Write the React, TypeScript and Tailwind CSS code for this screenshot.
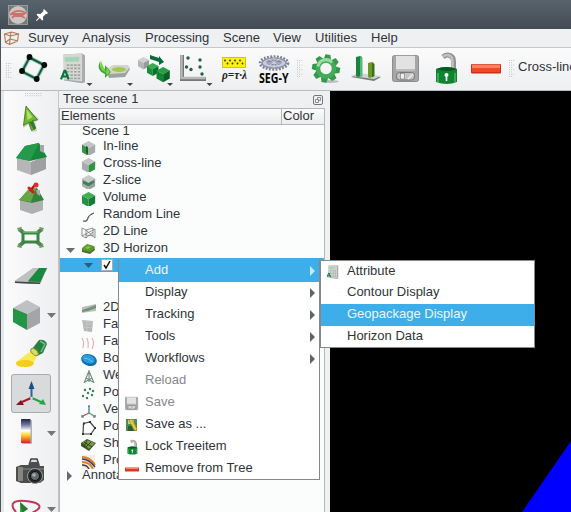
import type { ReactNode } from "react";

type Box = [number, number, number, number];

/** Drawing whose user space is given by a view box, shown at natural size. */
function Art({ box, children }: { box: Box; children: ReactNode }) {
  return (
    <svg className="block shrink-0" width={box[2]} height={box[3]} viewBox={box.join(" ")}>
      {children}
    </svg>
  );
}

function Grip({ across = false, rows = 8 }: { across?: boolean; rows?: number }) {
  const dots = [];
  const cols = across ? 8 : 3;
  const lines = across ? 2 : rows;
  for (let r = 0; r < lines; r++)
    for (let c = 0; c < cols; c++)
      if (across || c !== 2 || r % 2 === 0)
        dots.push(<rect key={`${r}-${c}`} x={c * 2.2} y={r * 2.3} width="0.9" height="0.9" fill="#b3b7ba" />);
  return (
    <svg className="block shrink-0" width={across ? 18 : 7} height={across ? 7 : 19}>
      {dots}
    </svg>
  );
}

function Cube({ x, y, s, top, left, right }: { x: number; y: number; s: number; top: string; left: string; right: string }) {
  const t = `translate(${x} ${y}) scale(${s})`;
  return (
    <g transform={t}>
      <path d="M0 3.7 7 0l7 3.7-7 4z" fill={top} />
      <path d="M0 3.7 7 7.7V16L0 12z" fill={left} />
      <path d="M14 3.7 7 7.7V16l7-4z" fill={right} />
    </g>
  );
}

function Floppy({ x, y, s }: { x: number; y: number; s: number }) {
  return (
    <g transform={`translate(${x} ${y}) scale(${s})`}>
      <rect x="0.5" y="0.5" width="26" height="26" rx="2" fill="#a6a6a6" stroke="#8d8d8d" />
      <rect x="4" y="0.8" width="19" height="14" fill="#e2e2e2" />
      <rect x="4" y="14" width="19" height="2" fill="#bdbdbd" />
      <rect x="4.5" y="17.5" width="18" height="7.5" rx="3" fill="#c4c4c4" stroke="#777" />
      <rect x="8.500" y="18.500" width="4" height="5.500" fill="#eee" stroke="#777" strokeWidth=".6" />
      <path d="m16 24 5-5" stroke="#eee" strokeWidth="1.5" />
    </g>
  );
}

function Lock({ x, y, s }: { x: number; y: number; s: number }) {
  return (
    <g transform={`translate(${x} ${y}) scale(${s})`}>
      <path d="M8 4C13 0 18.500 3 18.500 8v8" fill="none" stroke="#929292" strokeWidth="5" />
      <path d="M8 3.500C13 0 17.500 3 17.500 8v7" fill="none" stroke="#c2c2c2" strokeWidth="2.500" />
      <path d="M1 16q10-4 21 0v13q-10 4-21 0z" fill="#118432" />
      <path d="M1 16q10-4 21 0-10 4-21 0z" fill="#075a20" />
      <path d="M3 20v9M20 20v9" stroke="#3ba85a" strokeWidth="2" />
      <circle cx="11.5" cy="22" r="2" fill="#fff" />
      <path d="M11.5 22v6" stroke="#fff" strokeWidth="1.6" />
    </g>
  );
}

function Calc({ x, y, s }: { x: number; y: number; s: number }) {
  return (
    <g transform={`translate(${x} ${y}) scale(${s})`}>
      <path d="M3 1 22 0l3 2v28l-3 1-19-3z" fill="#aaa" />
      <path d="m2 1 20-1v29L3 27z" fill="#d5d8d4" />
      <path d="m4 4 15-.6v5L4 8.5z" fill="#a5d3b5" />
      <path d="M6 12h14M6 15.5h14M6 19h14M6 22.500h14M6 26h14" stroke="#a1a5a2" strokeWidth="1.8" strokeDasharray="2.6 1.2" />
      <path d="m0 27 3.600-9h1L8 27M1.300 24h5.400" fill="none" stroke="#08743d" strokeWidth="2.2" />
    </g>
  );
}

const dark = "#676b6e";

const toolbar: { box: Box; art: ReactNode }[] = [
  {
    box: [17, 48, 39, 42],
    art: (
      <g>
        <path d="m29.500 57.500 14.500 7.500-7.500 14L22 71.500z" fill="none" stroke="#9fd0bd" strokeWidth="4" />
        <path d="m29.500 57.500 14.500 7.500-7.500 14L22 71.500z" fill="none" stroke="#18593c" strokeWidth="2" />
        <g fill="#050806">
          <circle cx="29.500" cy="57" r="2.900" />
          <circle cx="44.300" cy="65" r="2.900" />
          <circle cx="36.700" cy="79" r="2.900" />
          <circle cx="22" cy="71" r="2.900" />
        </g>
      </g>
    ),
  },
  {
    box: [56, 48, 40, 42],
    art: (
      <g>
        <Calc x={61} y={53.500} s={0.96} />
        <path d="M86.500 83h6l-3 3z" fill="#444" />
      </g>
    ),
  },
  {
    box: [96, 48, 40, 42],
    art: (
      <g>
        <path d="m106 70 8-5h13l3 4-5 8-16 1z" fill="#9da39d" />
        <path d="m106 70 8-5h13l3 2-5 6-16 1z" fill="#d3d6d0" />
        <ellipse cx="119" cy="69.500" rx="7" ry="2.500" fill="#a1c94f" />
        <path d="M101 60c-4 6-3 11 4 14v4l6-6-6-7v4c-5-1-6-5-4-9z" fill="#36a744" />
        <path d="M101 61c-2 6 0 10 5 11l1-4 3 4-3 3z" fill="#80d33a" />
        <path d="M127 83h6l-3 3z" fill="#444" />
      </g>
    ),
  },
  {
    box: [136, 48, 41, 42],
    art: (
      <g>
        <path d="m150 55 9 3v-2l5 6-5 3v-3l-9-3z" fill="#086c38" />
        <Cube x={138} y={57} s={0.78} top="#d1d1d1" left="#b5b5b5" right="#999" />
        <Cube x={147} y={63} s={0.82} top="#35ad4b" left="#149136" right="#087128" />
        <Cube x={156.500} y={67} s={0.95} top="#25a044" left="#128633" right="#056124" />
        <path d="M167 83h6l-3 3z" fill="#444" />
      </g>
    ),
  },
  {
    box: [177, 48, 41, 42],
    art: (
      <g>
        <path d="M182 55v24h24" fill="none" stroke="#777" strokeWidth="4" />
        <path d="M181.500 55v23h24" fill="none" stroke="#b7b7b7" strokeWidth="2.500" />
        <g fill="#245f49">
          <circle cx="188" cy="58" r="1.700" />
          <circle cx="200" cy="60" r="1.700" />
          <circle cx="186.500" cy="67" r="1.700" />
          <circle cx="191" cy="69.500" r="1.700" />
          <circle cx="200" cy="67" r="1.700" />
          <circle cx="202" cy="74" r="1.700" />
        </g>
        <path d="M206.500 83h6l-3 3z" fill="#444" />
      </g>
    ),
  },
  {
    box: [218, 48, 37, 42],
    art: (
      <g>
        <rect x="222.500" y="57.500" width="23" height="10" fill="#fbf20c" stroke="#d0c51c" />
        <g fill="#373300">
          {[225, 230, 235, 240].map((x) => (
            <g key={x}>
              <circle cx={x} cy="60.500" r="0.900" />
              <circle cx={x + 2.500} cy="63.500" r="0.900" />
            </g>
          ))}
        </g>
        <text x="222" y="79" fontSize="12" fontStyle="italic" fontWeight="bold" fontFamily="Liberation Serif" textLength="25" lengthAdjust="spacingAndGlyphs" fill="#222">
          ρ=τ·λ
        </text>
      </g>
    ),
  },
  {
    box: [255, 48, 42, 42],
    art: (
      <g>
        <ellipse cx="274" cy="63" rx="13.800" ry="6.200" fill="none" stroke="#7b8098" strokeWidth="3" strokeDasharray="1.800 1.400" />
        <ellipse cx="274" cy="63" rx="12" ry="5" fill="#c9ccdb" stroke="#9094aa" strokeWidth="1.500" />
        <ellipse cx="274" cy="62.500" rx="8" ry="3" fill="#838799" />
        <path d="M265.500 63h17M274 57v11M268.500 59l11 7M279.500 59l-11 7" stroke="#e0e1ea" strokeWidth="0.700" />
        <g transform="translate(259 83) scale(.72 1)">
          <text fontSize="14" fontWeight="bold" fontFamily="Open Sans, Noto Sans, sans-serif" textLength="41" lengthAdjust="spacingAndGlyphs" fill="#080808">
            SEG-Y
          </text>
        </g>
      </g>
    ),
  },
];

const fileTools: { box: Box; art: ReactNode }[] = [
  {
    box: [305, 48, 42, 42],
    art: (
      <g transform="translate(326 68.500)">
        <ellipse cx="4" cy="13" rx="9" ry="1.500" fill="#b9bfba" />
        <g fill="#37984b">
          {[10, 55, 100, 145, 190, 235, 280, 325].map((a) => (
            <path key={a} transform={`rotate(${a})`} d="M-4-8-3-14h5l2 6z" />
          ))}
        </g>
        <circle r="8" fill="none" stroke="#43ac58" strokeWidth="4.500" />
        <path d="M-8-2a8 8 0 0 1 14-4" fill="none" stroke="#9bdca2" strokeWidth="3" />
      </g>
    ),
  },
  {
    box: [347, 48, 40, 42],
    art: (
      <g>
        <path d="m351 77 8-3 22 3-7 4z" fill="#777c7b" />
        <path d="m351 76 8-3 22 3-7 3z" fill="#cfd4d2" />
        <path d="m356 57 4-1 2 1v19l-4 1-2-1z" fill="#16853b" />
        <path d="m360 57 2.500 1v18l-2.500 1z" fill="#59b778" />
        <path d="m368 63 4-1 2 1v13l-4 2-2-1z" fill="#6b9927" />
        <path d="m372 63 2.500 1v12l-2.500 1.500z" fill="#3e701b" />
      </g>
    ),
  },
  { box: [387, 48, 39, 42], art: <Floppy x={392} y={55} s={1} /> },
  { box: [426, 48, 40, 42], art: <Lock x={435} y={53} s={1} /> },
  {
    box: [466, 48, 41, 42],
    art: (
      <g>
        <rect x="471" y="64" width="30" height="9.500" rx="1" fill="#c83118" />
        <rect x="472" y="64.500" width="28" height="4" fill="#f58362" />
        <rect x="472" y="68" width="28" height="4" fill="#ee4826" />
      </g>
    ),
  },
];

const sideTools: { box: Box; art: ReactNode; more?: boolean; low?: boolean; on?: boolean }[] = [
  {
    box: [11, 99, 40, 40],
    art: (
      <g>
        <path d="m26 107 13 12-4 3 2 9-5 1-3-8-6 4z" fill="#9ba293" opacity=".5" />
        <path d="m26 106 11.500 14-5 .5 3 8-4 2-3-8-5 3z" fill="#6fb92b" stroke="#3c6e20" strokeWidth=".8" />
        <path d="m26.500 109 1 11 5-3z" fill="#b3e268" />
        <path d="m29 122 5 8 2-2-3-7z" fill="#347a31" />
      </g>
    ),
  },
  {
    box: [11, 139, 40, 40],
    art: (
      <g>
        <path d="m17 157 14 5v13l-14-5zM31 162l15-6v13l-15 6z" fill="#b6b6b8" />
        <path d="m31 162 15-6v13l-15 6z" fill="#a0a0a3" />
        <path d="m16 158 9-12 14-3 8 14-17 4z" fill="#16883d" />
        <path d="m25 146 14-3-9 18-14-3z" fill="#249a4a" />
        <path d="M40 145h4v8l-4-2z" fill="#a6a6a7" />
      </g>
    ),
  },
  {
    box: [11, 179, 40, 40],
    art: (
      <g>
        <path d="m20 199 12 4v11l-12-4zM32 203l11-4v11l-11 4z" fill="#afb0b1" />
        <path d="m19 200 9-10 9-2 7 12-12 3z" fill="#348338" />
        <path d="m28 190 8-2-5 14-12-2z" fill="#65a644" />
        <path d="M36 190h4v6l-3-2z" fill="#aaa" />
        <path d="m30 191 5-6" stroke="#b81515" strokeWidth="2.500" />
        <path d="m29 188 4 4" stroke="#d51a1a" strokeWidth="3" strokeLinecap="round" />
        <path d="m31 192-3 4" stroke="#a88" />
        <circle cx="36" cy="185" r="2.500" fill="#e12b2b" />
      </g>
    ),
  },
  {
    box: [11, 219, 40, 38],
    art: (
      <g>
        <path d="m19 229 6 5M42 229l-6 5M19 246l6-5M42 246l-6-5" stroke="#50864c" strokeWidth="4" />
        <path d="m17 228 5-1-3 5zM44 228l-5-1 3 5zM17 247l5 1-3-5zM44 247l-5 1 3-5z" fill="#6a9c62" />
        <rect x="23" y="233" width="15" height="9" rx="1" fill="#f5faf4" stroke="#398746" strokeWidth="3" />
        <path d="M23 232h15" stroke="#95cd7e" />
      </g>
    ),
  },
  {
    box: [11, 257, 40, 39],
    art: (
      <g>
        <path d="m15 281 19-13h13l-7 16-25-1z" fill="#777b78" />
        <path d="m15 281 18-13h7l-12 14z" fill="#bfc1c0" />
        <path d="m28 281 11-13h8l-7 14z" fill="#168a3d" />
        <path d="M15 282h13l12 1v1l-25-1z" fill="#444" />
      </g>
    ),
  },
  {
    box: [11, 296, 36, 38],
    more: true,
    art: (
      <g>
        <path d="m13 308 14-8 13 7-13 7z" fill="#bfc0c2" />
        <path d="m13 308 14 6v16l-14-8z" fill="#239547" />
        <path d="m27 314 13-7v16l-13 7z" fill="#a4a5a8" />
      </g>
    ),
  },
  {
    box: [11, 334, 40, 40],
    art: (
      <g>
        <path d="m31 351-15 11q-1 5 8 5 8 0 9-4l5-8z" fill="#f9e957" />
        <ellipse cx="25" cy="363.500" rx="9" ry="3.500" fill="#f3ce1c" />
        <path d="m32 349 7-9q6-1 8 4l-4 9-6 3z" fill="#287f42" />
        <path d="m40 341 5 3-4 8" fill="none" stroke="#75bb80" strokeWidth="1.500" />
        <ellipse cx="34.500" cy="352" rx="4.500" ry="2.500" transform="rotate(45 34.500 352)" fill="#d8da69" stroke="#8c972d" />
      </g>
    ),
  },
  {
    box: [11, 374, 40, 39],
    on: true,
    art: (
      <g>
        <path d="M31.500 398v-10" stroke="#2365a8" strokeWidth="2" />
        <path d="m28.500 389 3-8 3 8z" fill="#16518e" />
        <path d="m31 398-9 4" stroke="#a01924" strokeWidth="2" />
        <path d="m16 405 5-5 3 5z" fill="#86131f" />
        <path d="m32 398 9 4" stroke="#24a344" strokeWidth="2" />
        <path d="m46 405-7-1 4-5z" fill="#2aa348" />
        <circle cx="31.500" cy="398" r="1.300" fill="#ddd" />
      </g>
    ),
  },
  {
    box: [11, 413, 36, 40],
    more: true,
    art: (
      <g>
        <defs>
          <linearGradient id="spectrum" x1="0" y1="0" x2="0" y2="1">
            <stop stopColor="#202348" />
            <stop offset=".25" stopColor="#747b9d" />
            <stop offset=".48" stopColor="#fff" />
            <stop offset=".65" stopColor="#ffda42" />
            <stop offset=".82" stopColor="#f28425" />
            <stop offset="1" stopColor="#d02420" />
          </linearGradient>
        </defs>
        <rect x="22" y="420" width="10" height="24" rx="1" fill="#adb1b9" />
        <rect x="21" y="419" width="9.500" height="24" rx=".5" fill="url(#spectrum)" />
      </g>
    ),
  },
  {
    box: [11, 453, 40, 39],
    art: (
      <g>
        <path d="m29 465 2-6h6l2 6" fill="#ddd" stroke="#444" strokeWidth="1.500" />
        <path d="m16 467 5-2h8l2-3h7l2 4h4v14l-4 3H21l-5-2z" fill="#4d4e4c" />
        <path d="M18 467h5v14h-5z" fill="#858681" />
        <path d="M23 469h21" stroke="#888b86" />
        <circle cx="35" cy="476" r="7.500" fill="#272a2a" stroke="#989c9a" />
        <circle cx="35" cy="476" r="4.500" fill="#626a6c" stroke="#111" />
        <circle cx="34" cy="475" r="1.800" fill="#a2adaf" />
      </g>
    ),
  },
  {
    box: [11, 492, 36, 20],
    more: true,
    low: true,
    art: (
      <g>
        <path d="M16 512c-7-8-3-12 9-11 13 1 18 5 12 9l-5 3" fill="none" stroke="#c1365a" strokeWidth="2" />
        <path d="m20 502 8 7-8 5z" fill="#43a64b" />
        <path d="m20 502 2 11 6-4z" fill="#267d34" />
      </g>
    ),
  },
];

const treeArt: Record<string, ReactNode> = {
  inline: (
    <g>
      <Cube x={1} y={2} s={0.94} top="#c4c4c6" left="#339546" right="#aaa9ad" />
      <path d="m5 7 2 1v7l-2-1z" fill="#185f28" />
    </g>
  ),
  cross: <Cube x={1} y={2} s={0.94} top="#c4c4c6" left="#aaa9ad" right="#2f9445" />,
  zslice: (
    <g>
      <Cube x={1} y={2} s={0.94} top="#c8cac9" left="#a9abac" right="#9a9d9e" />
      <path d="m2 7.500 5.500 2.500 5.500-2.500v2l-5.500 4-5.500-3z" fill="#358451" />
    </g>
  ),
  volume: <Cube x={1} y={2} s={0.94} top="#43ae52" left="#239244" right="#167c34" />,
  random: <path d="M2 14q4 1 5-3 1-3 6-5" fill="none" stroke="#555" strokeWidth="1.200" />,
  line: <path d="m1 4 4 2v8l-4-2zm4 2 7-2v8l-7-1M1 12l13-7v9L5 6M5 14l7-6" fill="none" stroke="#777" strokeWidth=".8" />,
  horizon: (
    <g>
      <path d="m1 8 5-4 7 2 1 3-5 4-8-2z" fill="#5d6637" />
      <path d="m1 7 5-4 7 2 1 2-5 4-8-2z" fill="#559c2b" />
      <path d="m4 7 3-2 3 1-3 2z" fill="#9bba47" />
    </g>
  ),
  surface: (
    <g>
      <path d="m1 7 14-3v7l-8 1-6 1z" fill="#b4c2b7" />
      <path d="m1 10 6-2 8-3v3l-8 3-6 1z" fill="#788d7d" />
    </g>
  ),
  fault: (
    <g>
      <path d="m1 3 11 1-1 11-8-1z" fill="#b5b7b6" />
      <path d="m1 4 11 1M2 7h9M2 10l9 1M6 4v10" stroke="#c9cac9" strokeWidth=".8" />
    </g>
  ),
  sticks: <path d="M1 4q3 4 1 10M6 4q2 5 1 10M11 4q3 4 0 11" fill="none" stroke="#e5a0a8" strokeWidth="1" />,
  body: (
    <g>
      <ellipse cx="8" cy="9" rx="8" ry="5.800" transform="rotate(18 8 9)" fill="#116db1" />
      <ellipse cx="7.500" cy="8" rx="6.500" ry="4" transform="rotate(18 7 8)" fill="#289cde" />
      <path d="M3 7q4 0 9 4" stroke="#68c1ed" fill="none" />
    </g>
  ),
  well: <path d="M8 2v12M8 3l-5 12M8 3l5 12M5 10l7 4M11 10l-7 4" fill="none" stroke="#718c7c" strokeWidth="1.100" />,
  points: (
    <g fill="#38834a">
      {[[4, 5], [9, 4], [12, 6], [7, 8], [2, 11], [11, 10], [6, 13]].map(([x, y]) => (
        <circle key={x} cx={x} cy={y} r="1.200" />
      ))}
    </g>
  ),
  vector: (
    <g fill="none" strokeWidth="1.200">
      <path d="M8 11V4" stroke="#32699f" />
      <path d="m8 11-6 3" stroke="#b34852" />
      <path d="m8 11 5 3" stroke="#41a35d" />
      <path d="M7 4h2M1 13v2h2M14 13v2h-2" stroke="#555" />
    </g>
  ),
  polygon: (
    <g>
      <path d="M2.500 4.500 9 3l5 6-4 6H2z" fill="none" stroke="#444" strokeWidth="1.200" />
      <path d="M2 3.500h2v2H2zM8 2h2v2H8zM13 8h2v2h-2zM9 14h2v2H9zM1 14h2v2H1z" fill="#333" />
    </g>
  ),
  shape: (
    <g>
      <path d="m0 7 6-4 9 4-7 8-8-5z" fill="#3f5528" />
      <path d="m1 6 5-2 8 3-6 6z" fill="#789747" />
      <path d="m3 6 8 5M6 4l-3 7M10 6l-5 5" stroke="#2e421e" />
    </g>
  ),
  prestack: (
    <g fill="none">
      <rect x="1" y="2" width="13" height="14" fill="#f7eee1" />
      <path d="M1 4q8 0 13 8M1 9q8 0 11 7" stroke="#db812e" strokeWidth="2" />
      <path d="M1 6q7 0 13 8M1 12q5 0 7 4" stroke="#333c5c" strokeWidth="1.500" />
    </g>
  ),
};

const upperRows: [string, string][] = [
  ["inline", "In-line"],
  ["cross", "Cross-line"],
  ["zslice", "Z-slice"],
  ["volume", "Volume"],
  ["random", "Random Line"],
  ["line", "2D Line"],
  ["horizon", "3D Horizon"],
];

const lowerRows: [string, string][] = [
  ["surface", "2D"],
  ["fault", "Fa"],
  ["sticks", "Fa"],
  ["body", "Bo"],
  ["well", "We"],
  ["points", "Po"],
  ["vector", "Ve"],
  ["polygon", "Po"],
  ["shape", "Sh"],
  ["prestack", "Pro"],
];

function TreeRow({ icon, label, open }: { icon: string; label: string; open?: boolean }) {
  return (
    <div className="flex h-[17px] shrink-0 items-center">
      <div className="flex w-[21px] justify-center">
        {open && (
          <svg width="9" height="5" className="mt-[3px]">
            <path d="M0 0h9L4.500 5z" fill={dark} />
          </svg>
        )}
      </div>
      <div className="w-[22px]">
        <Art box={[0, 0, 16, 16]}>{treeArt[icon]}</Art>
      </div>
      <span className="pb-[2px] leading-[17px]">{label}</span>
    </div>
  );
}

const contextMenu: { label: string; sub?: boolean; dim?: boolean; art?: ReactNode }[] = [
  { label: "Add", sub: true },
  { label: "Display", sub: true },
  { label: "Tracking", sub: true },
  { label: "Tools", sub: true },
  { label: "Workflows", sub: true },
  { label: "Reload", dim: true },
  { label: "Save", dim: true, art: <Floppy x={0} y={2} s={0.48} /> },
  {
    label: "Save as ...",
    art: (
      <g>
        <rect x="1" y="2" width="11" height="12" fill="#4f8b4a" />
        <path d="M3 3h6v4H3z" fill="#b7d0aa" />
        <path d="M3 9h7v5H3z" fill="#275e35" />
        <path d="m4 3 3-1 5 10-1 2-2-1z" fill="#e6c83c" stroke="#a77c22" strokeWidth=".6" />
      </g>
    ),
  },
  { label: "Lock Treeitem", art: <Lock x={2} y={1} s={0.47} /> },
  {
    label: "Remove from Tree",
    art: (
      <g>
        <rect x="0" y="6.500" width="14" height="4" fill="#d33c22" />
        <path d="M1 7.500h12" stroke="#f58a6e" />
      </g>
    ),
  },
];

function ContextMenu() {
  return (
    <div className="absolute left-[118px] top-[259px] h-[221px] w-[202px] border border-[#85898c] border-t-[#3daee9] bg-white">
      {contextMenu.map((m, i) => (
        <div
          key={m.label}
          className={`flex items-center ${i === 0 ? "bg-[#3daee9] text-[#e9f7ff]" : m.dim ? "text-[#85878a]" : ""} ${i === 9 ? "h-[21px]" : "h-[22px]"}`}
        >
          <div className="w-[26px] pl-[6px]">{m.art && <Art box={[0, 0, 16, 16]}>{m.art}</Art>}</div>
          <span className="grow pb-[3px]">{m.label}</span>
          {m.sub && (
            <svg width="6" height="10" className="mr-[4px]">
              <path d="M1 0v10l5-5z" fill={i === 0 ? "#c8eafa" : "#5e6265"} />
            </svg>
          )}
        </div>
      ))}
    </div>
  );
}

function SubMenu() {
  return (
    <div className="absolute left-[320px] top-[260px] h-[88px] w-[215px] border border-[#85898c] bg-white">
      {["Attribute", "Contour Display", "Geopackage Display", "Horizon Data"].map((s, i) => (
        <div key={s} className={`flex items-center ${i === 0 || i === 3 ? "h-[21px]" : "h-[22px]"} ${i === 2 ? "bg-[#3daee9] text-[#e9f7ff]" : ""}`}>
          <div className="w-[26px] pl-[6px]">
            {i === 0 && (
              <Art box={[0, 0, 16, 16]}>
                <Calc x={0} y={1} s={0.45} />
              </Art>
            )}
          </div>
          <span className="pb-[3px]">{s}</span>
        </div>
      ))}
    </div>
  );
}

export default function App() {
  return (
    <div className="relative flex h-[512px] w-[571px] flex-col overflow-hidden whitespace-nowrap bg-[#eff0f1] font-['Liberation_Sans',Arial,sans-serif] text-[13px] leading-[17px] text-[#303438]">
      <header className="flex h-[29px] shrink-0 items-center bg-linear-to-b from-[#58636b] to-[#434c54] pl-[8px]">
        <Art box={[8, 4, 20, 20]}>
          <rect x="8.500" y="4.500" width="19" height="19" fill="#77797b" stroke="#9b9a99" />
          <circle cx="18" cy="14" r="9" fill="#c9c7c5" />
          <path d="M10 14q7-7 16-2M12 13h12l-3 2h-7l-2 2M19 14l6 3" fill="none" stroke="#d0706d" strokeWidth="1.800" />
        </Art>
        <div className="pl-[8px]">
          <Art box={[36, 7, 14, 14]}>
            <path d="m44 8 4 4-1 1-1-.2-3 3 .2 3-1 .7-2.500-2.500-3 3-.7-.7 3-3-2.500-2.500 1-1 3 .2 3-3-.3-1z" fill="#fff" />
          </Art>
        </div>
      </header>

      <div className="flex grow flex-col border-l border-[#4c535a]">
        <nav className="flex h-[19px] shrink-0 items-center border-b border-[#c5c8ca] pb-[2px] pl-[2px]">
          <Art box={[3, 28, 18, 18]}>
            <path d="m4.500 34 6 2-1 8.500-4-2zM10.500 36l8-2-1 7-8 3.500M4.500 34l7-2 7 2M11 32l-1 7-4 3M10 39l8 2" fill="none" stroke="#b17a54" strokeWidth="1.100" />
          </Art>
          <span className="w-[54px] pl-[7px]">Survey</span>
          <span className="w-[63px] pl-[7px]">Analysis</span>
          <span className="w-[78px] pl-[7px]">Processing</span>
          <span className="w-[50px] pl-[7px]">Scene</span>
          <span className="w-[42px] pl-[7px]">View</span>
          <span className="w-[56px] pl-[7px]">Utilities</span>
          <span className="pl-[7px]">Help</span>
        </nav>

        <div className="flex h-[43px] shrink-0 items-start border-b border-[#b9bcbe] bg-linear-to-b from-[#fbfbfc] to-[#eeeff0]">
          <div className="w-[16px] shrink-0 pl-[5px] pt-[15px]"><Grip rows={7} /></div>
          {toolbar.map((t) => (
            <Art key={t.box[0]} box={t.box}>{t.art}</Art>
          ))}
          <div className="w-[8px] shrink-0 pt-[12px]"><Grip /></div>
          {fileTools.map((t) => (
            <Art key={t.box[0]} box={t.box}>{t.art}</Art>
          ))}
          <div className="w-[11px] shrink-0 pl-[2px] pt-[12px]"><Grip /></div>
          <span className="shrink-0 pt-[10px]">Cross-line</span>
        </div>

        <div className="flex h-[421px] shrink-0">
          <aside className="flex w-[58px] shrink-0 flex-col overflow-hidden border-l-[3px] border-r border-l-[#e6e7e9] border-r-[#c3c5c7] bg-linear-to-r from-[#fbfbfc] to-[#eeeff1]">
            <div className="h-[8px] shrink-0 pl-[21px] pt-[2px]"><Grip across /></div>
            {sideTools.map((t) => (
              <div key={t.box[1]} className="flex shrink-0 items-center pl-[7px]">
                <div className={t.on ? "rounded-[3px] bg-[#d9dadb] outline outline-1 -outline-offset-1 outline-[#a9abad]" : ""}>
                  <Art box={t.box}>{t.art}</Art>
                </div>
                {t.more && (
                  <svg width="9" height="5" className={t.low ? "mt-[14px]" : ""}>
                    <path d="M0 0h9L4.500 5z" fill="#73777a" />
                  </svg>
                )}
              </div>
            ))}
          </aside>

          <section className="flex w-[271px] shrink-0 flex-col">
            <div className="flex h-[17px] shrink-0 items-center justify-between pl-[4px] pr-[7px]">
              <span className="pb-[2px]">Tree scene 1</span>
              <Art box={[0, 0, 10, 10]}>
                <rect x=".5" y=".5" width="9" height="9" rx="1.500" fill="none" stroke="#73777a" />
                <path d="M4.500 4.500V2.500h3v3h-2M2.500 4.500h3v3h-3z" fill="none" stroke="#73777a" strokeWidth=".8" />
              </Art>
            </div>
            <div className="flex w-[266px] grow flex-col border border-b-0 border-[#b5b8ba] bg-[#fbfdfd]">
              <div className="flex h-[16px] shrink-0 items-center border-b border-[#b5b8ba] bg-linear-to-b from-[#fcfcfc] to-[#ebeced]">
                <span className="w-[221px] pb-[2px] pl-[1px]">Elements</span>
                <span className="h-[15px] border-l border-[#b5b8ba] pl-[1px] leading-[13px]">Color</span>
              </div>
              <div className="h-[13px] shrink-0 pl-[22px] leading-[11px]">Scene 1</div>
              {upperRows.map(([icon, label]) => (
                <TreeRow key={label} icon={icon} label={label} open={icon === "horizon"} />
              ))}
              <div className="mt-[1px] flex h-[14px] shrink-0 items-center bg-[#3daee9] pl-[24px]">
                <svg width="9" height="5">
                  <path d="M0 0h9L4.500 5z" fill="#275e83" />
                </svg>
                <div className="ml-[8px] h-[12px] w-[12px] border border-[#a9adb0] bg-white">
                  <svg width="10" height="10">
                    <path d="m2 5 2 3 4-7" fill="none" stroke="#111" strokeWidth="1.500" />
                  </svg>
                </div>
              </div>
              <div className="h-[27px] shrink-0" />
              {lowerRows.map(([icon, label]) => (
                <TreeRow key={icon} icon={icon} label={label} />
              ))}
              <div className="flex h-[13px] shrink-0 items-center pl-[7px]">
                <svg width="6" height="10">
                  <path d="M0 0v10l5-5z" fill={dark} />
                </svg>
                <span className="pb-[2px] pl-[9px] leading-[13px]">Annota</span>
              </div>
            </div>
          </section>

          <main className="flex grow items-end justify-end bg-black">
            <Art box={[0, 0, 49, 71]}>
              <path d="M49 0v71H0z" fill="#0000fe" />
            </Art>
          </main>
        </div>
      </div>

      <ContextMenu />
      <SubMenu />
    </div>
  );
}
